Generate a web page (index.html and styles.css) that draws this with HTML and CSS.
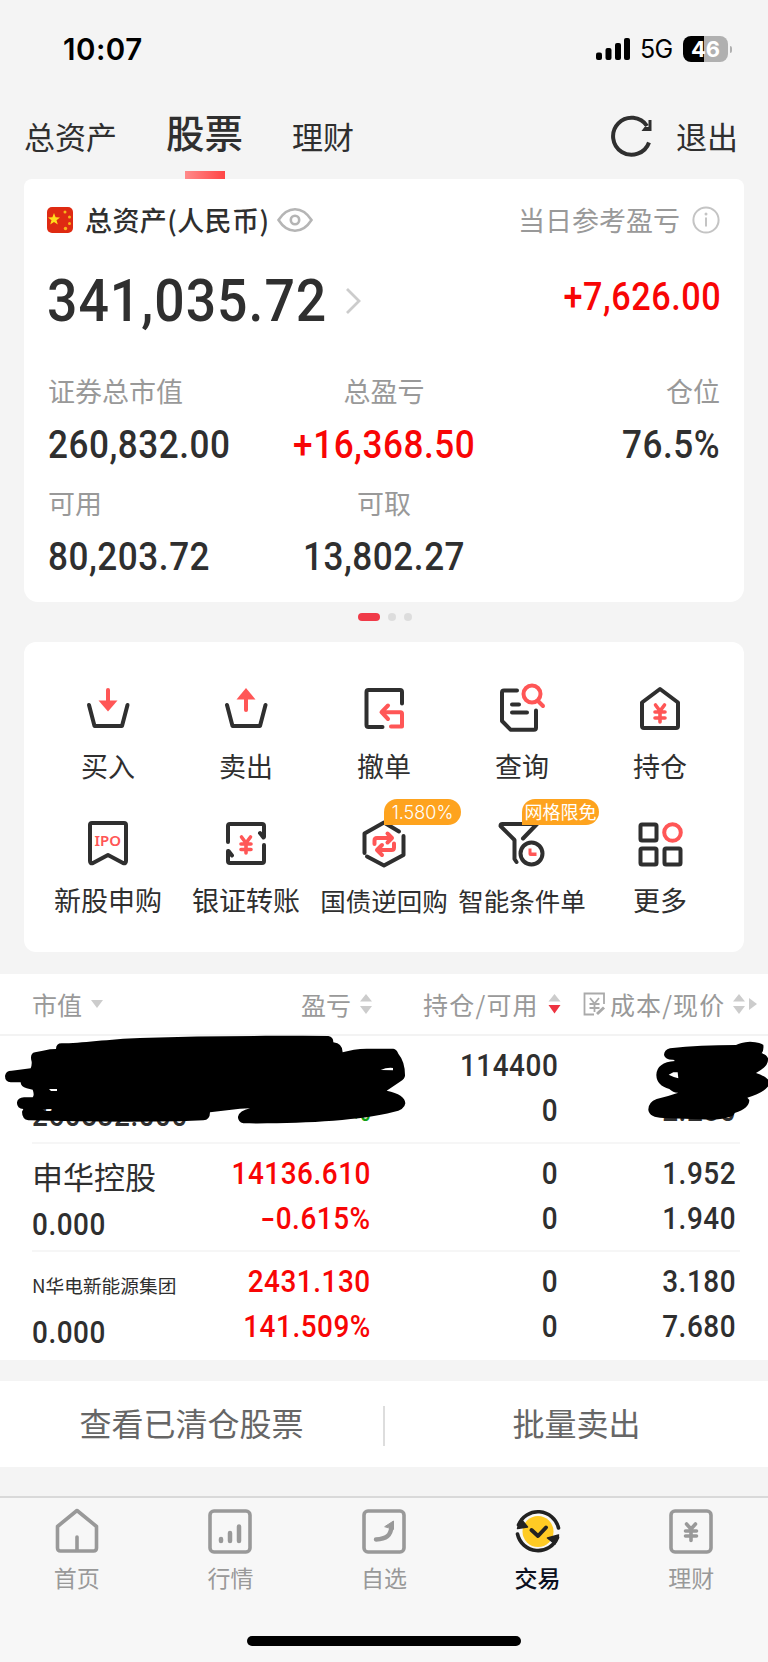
FILE: index.html
```html
<!DOCTYPE html>
<html lang="zh-CN">
<head>
<meta charset="utf-8">
<title>股票</title>
<link rel="stylesheet" href="styles.css">
</head>
<body>
<div class="status">
  <span class="time">10:07</span>
  <div class="status-right">
    <svg class="signal" width="35" height="22" viewBox="0 0 35 22"><rect x="0" y="14.500" width="6" height="7.500" rx="2"/><rect x="9.500" y="10" width="6" height="12" rx="2"/><rect x="19" y="5" width="6" height="17" rx="2"/><rect x="28" y="0" width="6" height="22" rx="2"/></svg>
    <span class="net">5G</span>
    <span class="battery">46</span><i class="nub"></i>
  </div>
</div>
<header class="tabs">
  <span class="tab t1">总资产</span>
  <span class="tab active">股票</span>
  <span class="tab t3">理财</span>
  <svg class="refresh" width="44" height="42" viewBox="0 0 44 42" fill="none" stroke="#2f2f2f" stroke-width="4"><path d="M39 27.500A18.500 18.500 0 1 1 37 11"/><path d="M41.500 5v11h-10l3-4h4V5z" fill="#2f2f2f" stroke="none"/></svg>
  <span class="tab exit">退出</span>
</header>

<section class="card assets">
  <div class="assets-head">
    <svg class="flag" width="26" height="26" viewBox="0 0 26 26"><rect width="26" height="26" rx="5" fill="#df2a12"/><path d="M7 6l1.600 4.200 4.400.2-3.500 2.800 1.300 4.300L7 15l-3.800 2.500 1.300-4.300L1 10.400l4.400-.2z" fill="#ffde1b"/><g fill="#f7b51a"><circle cx="18" cy="5" r="1.500"/><circle cx="22.500" cy="10" r="1.500"/><circle cx="22.500" cy="16.500" r="1.500"/><circle cx="18.500" cy="21.500" r="1.700"/></g></svg>
    <span class="head-label">总资产(人民币)</span>
    <svg class="eye" width="36" height="26" viewBox="0 0 36 26" fill="none" stroke="#b5b5b5" stroke-width="2.600"><path d="M1.500 13C6 6 11.500 2.200 18 2.200S30 6 34.500 13C30 20 24.500 23.800 18 23.800S6 20 1.500 13z"/><circle cx="18" cy="13" r="4.200"/></svg>
    <span class="head-right">当日参考盈亏</span>
    <svg class="info" width="28" height="28" viewBox="0 0 28 28" fill="none" stroke="#c4c4c4" stroke-width="2"><circle cx="14" cy="14" r="12.600"/><path d="M14 11.500v9"/><circle cx="14" cy="8" r="1.500" fill="#c4c4c4" stroke="none"/></svg>
  </div>
  <div class="total-row">
    <span class="total num">341,035.72</span>
    <svg class="chev" width="17" height="28" viewBox="0 0 17 28" fill="none" stroke="#ccc" stroke-width="2.800"><path d="M2 2l12 12L2 26"/></svg>
    <span class="day num red">+7,626.00</span>
  </div>
  <div class="stats">
    <div class="stat"><span class="k">证券总市值</span><span class="v num">260,832.00</span></div>
    <div class="stat mid"><span class="k">总盈亏</span><span class="v num red">+16,368.50</span></div>
    <div class="stat end"><span class="k">仓位</span><span class="v num">76.5%</span></div>
    <div class="stat"><span class="k">可用</span><span class="v num">80,203.72</span></div>
    <div class="stat mid"><span class="k">可取</span><span class="v num">13,802.27</span></div>
  </div>
</section>
<div class="dots"><i class="on"></i><i></i><i></i></div>

<section class="card actions">
  <div class="action">
    <svg width="60" height="56" viewBox="0 0 60 56" class="ic"><path d="M11 20l5.500 21h27.500L49.500 20"/><path class="r" d="M30 5v11"/><path class="rf" d="M20.500 15.500h19L30 26.500z"/></svg>
    <span class="wide">买入</span></div>
  <div class="action">
    <svg width="60" height="56" viewBox="0 0 60 56" class="ic"><path d="M11 20l5.500 21h27.500L49.500 20"/><path class="r" d="M30 25V13"/><path class="rf" d="M20.500 14.500h19L30 3z"/></svg>
    <span class="wide">卖出</span></div>
  <div class="action">
    <svg width="60" height="56" viewBox="0 0 60 56" class="ic"><path d="M28.500 42H14.500q-2 0-2-2V7q0-2 2-2H46q2 0 2 2v11.500"/><path class="r" d="M34 20.500l-6.500 6.700L34 34M29 27.300h17.500q1.500 0 1.500 1.500V41.500H37"/></svg>
    <span class="wide">撤单</span></div>
  <div class="action">
    <svg width="60" height="56" viewBox="0 0 60 56" class="ic"><path d="M25 5.500H12q-2 0-2 2V36l8.500 8.700H42q2 0 2-2V25.500M20 19.500h7M20 27.500h15"/><circle class="r" cx="40" cy="9" r="8.500"/><path class="r" d="M46 16l5 5"/></svg>
    <span class="wide">查询</span></div>
  <div class="action">
    <svg width="60" height="56" viewBox="0 0 60 56" class="ic"><path d="M30 4L48 17.500V41q0 2-2 2H14q-2 0-2-2V17.500z"/><path class="r yen" d="M25.500 20l4.500 6 4.500-6M25 27h10M25 33h10M30 26v11"/></svg>
    <span class="wide">持仓</span></div>

  <div class="action">
    <svg width="60" height="56" viewBox="0 0 60 56" class="ic"><path d="M14 4H46q2 0 2 2V42q0 3-3 2L30 36 15 44q-3 1-3-2V6q0-2 2-2z"/><text x="29.800" y="26.500" class="ipo">IPO</text></svg>
    <span class="wide">新股申购</span></div>
  <div class="action">
    <svg width="60" height="56" viewBox="0 0 60 56" class="ic"><path d="M12 23V7q0-2 2-2H46q2 0 2 2v11M48 26V42q0 2-2 2H14q-2 0-2-2V32M47.500 18.500L44 14M12.500 32l3.500 4.500"/><path class="r yen" d="M25.500 18l4.500 6 4.500-6M25 25h10M25 30.500h10M30 24v10"/></svg>
    <span class="wide">银证转账</span></div>
  <div class="action">
    <svg width="60" height="56" viewBox="0 0 60 56" class="ic"><path d="M10.500 34V14.500L30 3.500 45 12.500M49.500 17V36L30 46.500 13 37.500"/><path class="r" d="M20.500 25v-3.500q0-2.500 2.500-2.500h13.500M33.500 14.500l4.500 4.500-4.500 4.500M40 24.500v4q0 2.500-2.500 2.500H23.500M28 26l-5 5 5 5"/></svg>
    <b class="badge">1.580%</b>
    <span>国债逆回购</span></div>
  <div class="action">
    <svg width="60" height="56" viewBox="0 0 60 56" class="ic"><path d="M24.500 43L22.500 40V21L8.500 7Q8.500 5 10.500 5H45L31 19.500"/><circle cx="39.500" cy="34.500" r="11"/><path class="rf" d="M36.500 29.500h3v4h5v3.500h-6q-2 0-2-2z"/></svg>
    <b class="badge zh">网格限免</b>
    <span>智能条件单</span></div>
  <div class="action">
    <svg width="60" height="56" viewBox="0 0 60 56" class="ic"><rect x="10.500" y="5.500" width="16" height="16" rx="1.500"/><rect x="10.500" y="29.500" width="16" height="16" rx="1.500"/><rect x="34.500" y="29.500" width="16" height="16" rx="1.500"/><circle class="r" cx="42.500" cy="13.500" r="8.300"/></svg>
    <span class="wide">更多</span></div>
</section>

<section class="holdings">
  <div class="lhead">
    <div class="c1">市值<svg width="12" height="8" viewBox="0 0 12 8"><path d="M0 0h12L6 8z" fill="#ccc"/></svg></div>
    <div class="c2">盈亏<svg width="12" height="20" viewBox="0 0 12 20"><path d="M6 0l6 7.500H0zM0 12h12L6 20z" fill="#ccc"/></svg></div>
    <div class="c3">持仓/可用<svg width="13" height="20" viewBox="0 0 12 20"><path d="M6 0l6 7.500H0z" fill="#ccc"/><path d="M0 11h12L6 19.500z" fill="#ee3340"/></svg></div>
    <div class="c4"><svg class="edit" width="23" height="24" viewBox="0 0 23 24" fill="none" stroke="#aaa" stroke-width="1.800"><path d="M21 12V1.500H1.500v21H11M7 6l4.500 5.500L16 6M6.500 12h10M6.500 16h10M11.500 11.500V20"/><path d="M14 22l7-6.500" stroke-width="3"/></svg>成本/现价<svg class="both" width="12" height="20" viewBox="0 0 12 20"><path d="M6 0l6 7.500H0zM0 12h12L6 20z" fill="#ccc"/></svg><svg class="next" width="8" height="12" viewBox="0 0 8 12"><path d="M0 0v12l8-6z" fill="#ccc"/></svg></div>
  </div>
  <div class="row covered">
    <div class="cell left"><span class="name"></span><span class="num">260832.000</span></div>
    <div class="cell"><span class="num"></span><span class="num green">%</span></div>
    <div class="cell"><span class="num">114400</span><span class="num">0</span></div>
    <div class="cell"><span class="num"></span><span class="num">2.280</span></div>
    <svg class="scribble" width="768" height="180" viewBox="0 0 2304 540">
      <path fill-rule="evenodd" d="M185 235C240 235 330 222 420 219C600 212 800 212 985 213Q1000 215 1000 232Q1028 235 1028 262Q1060 252 1100 251H1180Q1190 252 1195 266Q1215 290 1215 330Q1216 340 1200 350L1160 377Q1215 388 1216 415Q1214 435 1180 441C1080 467 900 477 730 475Q713 470 714 455Q718 437 750 430L720 431L630 442Q630 465 610 466L540 469Q300 472 85 466Q66 462 66 440L70 432Q50 430 51 412Q53 398 72 397H98Q104 390 98 374L80 370Q62 365 62 352H32Q15 350 15 333Q17 317 35 317L92 310Q96 300 95 290Q88 265 105 262Q130 258 150 253L168 252Q168 235 185 235zM147 372H171V378H153zM128 433L156 432V438H134zM1142 315Q1160 307 1179 309V316z"/>
      <path fill-rule="evenodd" transform="translate(1140 0)" d="M870 250Q852 255 852 270Q856 285 880 284L885 288Q830 292 829 330Q830 362 868 372Q880 384 895 383Q860 395 830 402Q804 412 805 435Q808 458 850 459L1000 464Q1060 460 1064 444Q1108 430 1108 405L1102 398Q1150 385 1166 362V345Q1150 330 1128 324Q1164 305 1164 285V280Q1160 268 1145 265Q1152 255 1150 240Q1145 232 1110 230Q1080 232 1068 240Q960 240 870 250zM866 329L880 322H893L895 340Q880 336 866 329z"/>
    </svg>
  </div>
  <div class="row">
    <div class="cell left"><span class="name">申华控股</span><span class="num">0.000</span></div>
    <div class="cell red"><span class="num">14136.610</span><span class="num"><span class="minus">-</span>0.615%</span></div>
    <div class="cell"><span class="num">0</span><span class="num">0</span></div>
    <div class="cell"><span class="num">1.952</span><span class="num">1.940</span></div>
  </div>
  <div class="row">
    <div class="cell left"><span class="name small">N华电新能源集团</span><span class="num">0.000</span></div>
    <div class="cell red"><span class="num">2431.130</span><span class="num">141.509%</span></div>
    <div class="cell"><span class="num">0</span><span class="num">0</span></div>
    <div class="cell"><span class="num">3.180</span><span class="num">7.680</span></div>
  </div>
</section>
<div class="links"><span>查看已清仓股票</span><i></i><span>批量卖出</span></div>

<nav class="nav">
  <div class="item"><svg width="50" height="50" viewBox="0 0 50 50"><path d="M25 4.500L44.500 20.500V42q0 3-3 3h-33q-3 0-3-3V20.500z"/><path d="M25 31v13"/></svg>首页</div>
  <div class="item"><svg width="50" height="50" viewBox="0 0 50 50"><rect x="5" y="5" width="40" height="41" rx="4"/><path d="M16 33v2M25 27v8M34 20.500V35" stroke-width="4.500"/></svg>行情</div>
  <div class="item"><svg width="50" height="50" viewBox="0 0 50 50"><rect x="5" y="5" width="40" height="41" rx="4"/><path d="M17 33.500C27 33 32 30 32.500 20" stroke-width="4.500"/><path d="M26 20.500L34.500 15V23z" fill="#999" stroke-width="1"/></svg>自选</div>
  <div class="item on"><svg width="50" height="50" viewBox="0 0 50 50"><circle cx="25" cy="25.500" r="15.500" fill="#ffcb24" stroke="none"/><path d="M5.500 19A21 21 0 0 1 45.500 22M44.500 31.500A21 21 0 0 1 4.500 28"/><path d="M8 13L4.500 22.500l10-1.500zM42 38l3.500-9-11 3z" fill="#222" stroke-width="1.500"/><path d="M18.500 24l6.500 6 8-8.500" stroke-width="4"/></svg>交易</div>
  <div class="item"><svg width="50" height="50" viewBox="0 0 50 50"><rect x="5" y="5" width="40" height="41" rx="4"/><path d="M20.500 18l4.500 5 4.500-5M19.500 25h11M19.500 30h11M25 23v11.500"/></svg>理财</div>
</nav>
<div class="home-area"><i></i></div>
</body>
</html>
```
FILE: styles.css
```css
* { box-sizing: border-box; }
body { margin: 0; width: 768px; height: 1662px; background: #f4f4f4; color: #2f2f2f; font-family: "Noto Sans CJK SC", sans-serif; overflow: hidden; }
svg { display: block; flex: none; }
span { white-space: nowrap; }
.num { font-family: Roboto, sans-serif; font-weight: 500; transform: scaleX(.9); transform-origin: right center; }
.red { color: #f80505; }
.green { color: #12a012; }

.status { height: 98px; padding: 36px 37px 0 63px; display: flex; justify-content: space-between; font-family: Inter, sans-serif; color: #000; }
.time { font-size: 29.500px; font-weight: 600; line-height: 27px; letter-spacing: .5px; }
.status-right { display: flex; height: 26px; align-items: center; margin-right: -1px; }
.net { font-size: 25px; width: 33px; margin-left: 9px; margin-right: 10px; line-height: 26px; letter-spacing: -.8px; }
.battery { width: 45px; height: 26px; border-radius: 8px; background: linear-gradient(90deg, #000 46%, #b0b0b0 46%); color: #fff; font-weight: 700; font-size: 22px; line-height: 26px; text-align: center; }
.nub { width: 2px; height: 7px; background: #b0b0b0; border-radius: 0 2px 2px 0; margin-left: 2px; }

.tabs { height: 81px; display: flex; padding: 0 30px 0 24px; }
.tab { font-size: 31px; line-height: 40px; height: 40px; margin-top: 18px; }
.t1 { width: 142px; }
.active { position: relative; width: 126px; height: 68px; font-size: 38.500px; font-weight: 500; margin-top: 13px; }
.active::after { content: ""; position: absolute; left: 19px; top: 60px; width: 40px; height: 8px; background: linear-gradient(90deg, #ff8a8a, #ff4545); }
.refresh { margin: 17px 22px 0 auto; }

.card { width: 720px; margin: 0 auto; background: #fff; border-radius: 12px; }
.assets { height: 423px; padding: 24px 24px 0 23px; border-radius: 8px 8px 14px 14px; }
.assets-head { display: flex; height: 34px; align-items: center; font-size: 27px; line-height: 34px; }
.head-label { margin-left: 12px; letter-spacing: .4px; font-weight: 500; }
.eye { margin-left: 8px; }
.head-right { margin-left: auto; margin-right: 12px; color: #999; }
.total-row { display: flex; height: 84px; align-items: center; margin-top: 22px; }
.total { font-size: 59.500px; line-height: 84px; letter-spacing: 1.100px; width: 298px; transform-origin: left center; }
.day { margin-left: auto; margin-right: -1px; font-size: 38px; letter-spacing: .6px; padding-bottom: 8px; }
.stats { display: grid; grid-template-columns: 224px 1fr 224px; grid-auto-rows: 112px; margin-top: 29px; }
.stat { display: flex; flex-direction: column; align-items: flex-start; padding-left: 1px; }
.stat.mid { align-items: center; }
.stat.end { align-items: flex-end; }
.k { font-size: 27px; line-height: 38px; color: #999; }
.v { font-size: 39px; line-height: 50px; margin-top: 10px; letter-spacing: .6px; transform-origin: left center; }
.mid .v { transform-origin: center; }
.end .v { transform-origin: right center; }

.dots { height: 40px; display: flex; justify-content: center; gap: 8px; padding: 11px 0 0 1px; }
.dots i { width: 8px; height: 8px; border-radius: 4px; background: #ddd; }
.dots .on { width: 22px; background: #f03a48; }

.actions { height: 310px; padding: 43px 15px 0; display: grid; grid-template-columns: repeat(5, 1fr); grid-auto-rows: 134px; }
.action { position: relative; display: flex; flex-direction: column; align-items: center; font-size: 25.500px; line-height: 40px; }
.action span { margin-top: 5px; }
.wide { font-size: 27px; }
.ic { fill: none; stroke: #2f2f2f; stroke-width: 4; stroke-linecap: round; stroke-linejoin: round; overflow: visible; }
.ic .r { stroke: #ff5656; }
.ic .rf { fill: #ff5656; stroke: none; }
.ic .yen { stroke-width: 3.600; }
.ipo { font: 600 15px "Noto Sans", sans-serif; fill: #ff5656; stroke: none; text-anchor: middle; }
.badge { position: absolute; left: 69px; top: -20px; width: 77px; height: 26px; border-radius: 13px 13px 13px 0; background: #fea31e; color: #fff; font: 300 18px/28px Inter, sans-serif; text-align: center; }
.badge.zh { font: 400 18px/25px "Noto Sans CJK SC", sans-serif; }

.holdings { margin-top: 22px; height: 386px; background: #fff; }
.lhead { height: 62px; border-bottom: 2px solid #f3f3f3; display: flex; align-items: center; color: #999; font-size: 25px; line-height: 60px; }
.lhead div { display: flex; align-items: center; }
.c1 { width: 269px; padding-left: 32px; gap: 9px; }
.c2 { width: 123px; padding-left: 32px; gap: 9px; }
.c3 { width: 191px; padding-left: 31px; gap: 9px; letter-spacing: 1.200px; }
.c4 { letter-spacing: 1.100px; }
.edit { margin-right: 4px; }
.both { margin-left: 8px; }
.next { margin-left: 4px; }
.row { position: relative; height: 108px; margin: 0 28px 0 32px; display: grid; grid-template-columns: 180px 159px 187px 1fr; border-bottom: 2px solid #f6f6f6; font-size: 31px; }
.row:last-child { border: 0; }
.cell { display: flex; flex-direction: column; align-items: flex-end; padding: 7px 0 0; }
.cell:last-of-type { padding-right: 4px; }
.cell .num { height: 45px; line-height: 45px; letter-spacing: .6px; }
.minus { display: inline-block; transform: scaleX(1.500); transform-origin: right center; }
.cell.left { align-items: flex-start; padding-top: 9px; }
.cell.left .num { transform-origin: left center; }
.covered .left { margin-top: -1px; }
.cell.left .name { height: 49px; line-height: 46px; }
.cell.left .small { font-size: 18.700px; line-height: 48px; }
.scribble { position: absolute; left: -32px; top: -71px; }

.links { margin-top: 21px; height: 86px; background: #fff; display: flex; align-items: center; color: #666; font-size: 32px; line-height: 82px; padding-bottom: 4px; }
.links span { width: 383px; text-align: center; }
.links i { width: 2px; height: 40px; background: #ddd; margin-top: 8px; }

.nav { margin-top: 29px; border-top: 2px solid #d9d9d9; background: #f7f7f7; height: 110px; display: flex; }
.item { flex: 1; display: flex; flex-direction: column; align-items: center; padding-top: 8px; color: #999; font-size: 23px; line-height: 34px; gap: 4px; }
.item svg { fill: none; stroke: #999; stroke-width: 3.600; stroke-linecap: round; stroke-linejoin: round; }
.on { color: #0b1020; font-weight: 500; }
.item.on svg { stroke: #222; }
.home-area { height: 56px; background: #f7f7f7; padding-top: 30px; }
.home-area i { display: block; width: 274px; height: 10px; border-radius: 5px; background: #000; margin: 0 auto; }
```
